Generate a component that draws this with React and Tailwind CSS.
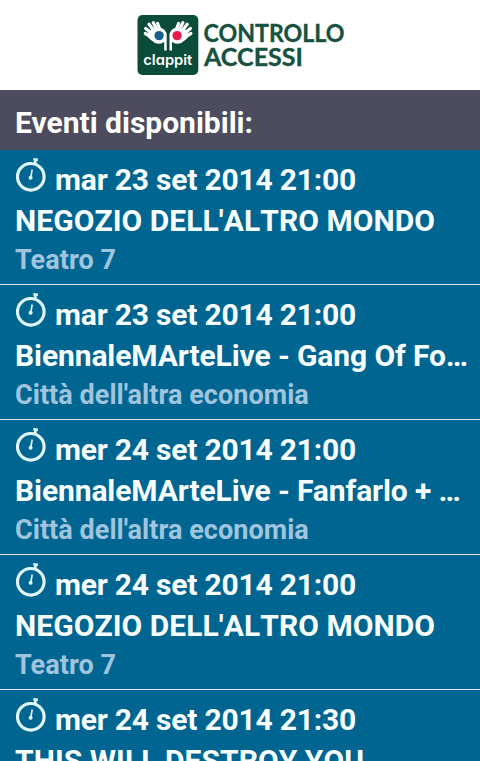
import React from "react";

const events = [
  { date: "mar 23 set 2014 21:00", title: "NEGOZIO DELL'ALTRO MONDO", place: "Teatro 7" },
  { date: "mar 23 set 2014 21:00", title: "BiennaleMArteLive - Gang Of Fo…", place: "Città dell'altra economia" },
  { date: "mer 24 set 2014 21:00", title: "BiennaleMArteLive - Fanfarlo + …", place: "Città dell'altra economia" },
  { date: "mer 24 set 2014 21:00", title: "NEGOZIO DELL'ALTRO MONDO", place: "Teatro 7" },
  { date: "mer 24 set 2014 21:30", title: "THIS WILL DESTROY YOU" },
];

function Stopwatch() {
  return (
    <svg viewBox="0 0 32 36" className="h-9 w-8 shrink-0" fill="none" stroke="#e2f8ff">
      <circle cx="15.8" cy="19.8" r="13.3" strokeWidth="3.1" />
      <path d="M20 7 20.5 3.5" strokeWidth="2.6" />
      <path d="M18.3 2.2 22.9 2.9" strokeWidth="2.6" />
      <path d="M15.8 20.5 17.2 12.5" strokeWidth="1.6" />
      <circle cx="15.6" cy="20.7" r="2" fill="#e2f8ff" stroke="none" />
    </svg>
  );
}

function Hand({ dot }) {
  return (
    <g>
      <g stroke="#fff" strokeWidth="3.2" strokeLinecap="round" fill="none">
        <path d="M8.3 19.5 16 24" />
        <path d="M8.7 14.4 17 21" />
        <path d="M12 10.3 18.5 18.5" />
        <path d="M16.3 8.6 20.5 17" />
        <path d="M20.6 9.5 23.5 17" />
      </g>
      <path d="M9 20.5 14 15.5 22 13.5A7.8 7.8 0 0 1 29.7 21.7V36.5H27.2V28Q23 31 18 29Q12.5 26 9 20.5Z" fill="#fff" />
      <circle cx="22.1" cy="21.6" r="4.7" fill={dot} />
    </g>
  );
}

function Logo() {
  return (
    <svg viewBox="0 0 208 62" className="h-[62px] w-[208px] overflow-visible">
      <rect x="0.5" y="1" width="60.8" height="60" rx="5" fill="#0b4b39" />
      <Hand dot="#17608f" />
      <g transform="translate(62.2 0) scale(-1 1)">
        <Hand dot="#e51b4c" />
      </g>
      <text x="6.3" y="51.3" fontSize="14.5" fontWeight="600" textLength="49" lengthAdjust="spacingAndGlyphs" fill="#fff" className="font-['Inter',sans-serif] [font-feature-settings:'cv11']">clappit</text>
      <g fill="#17513f" stroke="#17513f" strokeWidth="0.35" fontSize="24.3" fontWeight="700" className="font-['Lato',sans-serif]">
        <text x="66.5" y="28" textLength="141" lengthAdjust="spacingAndGlyphs">CONTROLLO</text>
        <text x="67" y="52.3" textLength="99" lengthAdjust="spacingAndGlyphs">ACCESSI</text>
      </g>
    </svg>
  );
}

function EventRow({ event }) {
  const caps = event.title === event.title.toUpperCase();
  return (
    <li className="h-[135px] shrink-0 border-b border-[#dce6ee] px-[15px] pt-[10px]">
      <div className="flex h-10 items-start gap-2">
        <div className="-mt-[3px] flex">
          <Stopwatch />
        </div>
        <span className="whitespace-nowrap text-[30px] leading-10 tracking-[-0.2px]">{event.date}</span>
      </div>
      <h2 className={caps ? "mt-px whitespace-nowrap text-[30px] leading-10 tracking-[0.06px] [font-kerning:none]" : "mt-px whitespace-nowrap text-[30px] leading-10 tracking-[-0.1px]"}>
        {event.title}
      </h2>
      {event.place && <p className="text-[27px] leading-[38px] tracking-[0.05px] text-[#a0c4de]">{event.place}</p>}
    </li>
  );
}

export default function App() {
  return (
    <div className="flex h-[761px] w-[480px] flex-col overflow-hidden bg-[#006691] font-['Roboto',sans-serif] font-bold text-[#f8feff]">
      <header className="flex h-[90px] shrink-0 bg-white pl-[137px] pt-[14px]">
        <Logo />
      </header>
      <h1 className="h-[60px] shrink-0 bg-[#4c4c5e] px-[15px] pt-[13px] text-[30px] leading-10 text-white">Eventi disponibili:</h1>
      <ul className="flex flex-col">
        {events.map((event, i) => (
          <EventRow key={i} event={event} />
        ))}
      </ul>
    </div>
  );
}
